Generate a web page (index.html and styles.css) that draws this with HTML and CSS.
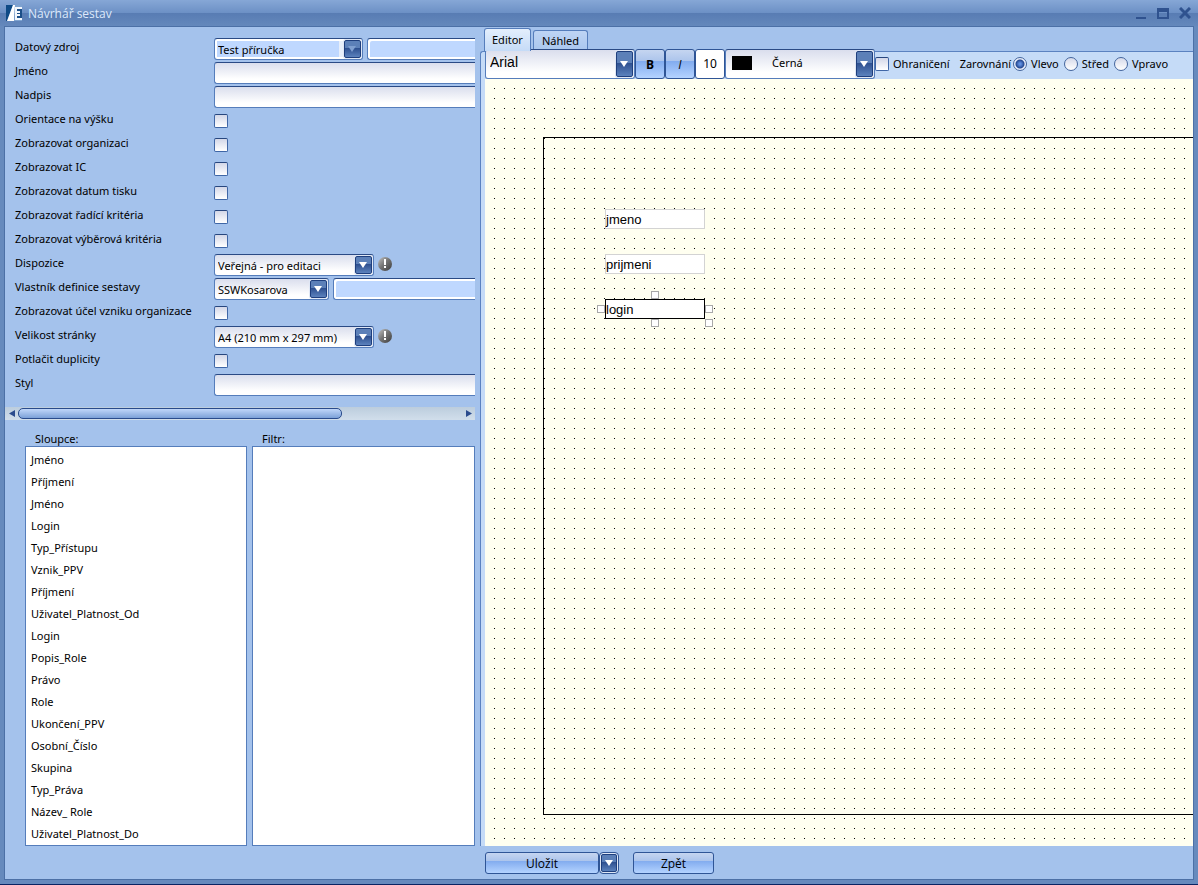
FILE: index.html
```html
<!DOCTYPE html>
<html lang="cs">
<head>
<meta charset="utf-8">
<title>Návrhář sestav</title>
<link rel="stylesheet" href="styles.css">
</head>
<body>
<div class="window">
  <header class="titlebar">
    <svg class="logo" width="16" height="16" viewBox="0 0 16 16" aria-hidden="true">
      <path d="M0 0H7L1 16H0Z" fill="#0e4a86"/>
      <path d="M7 0H9L8 16H1Z" fill="#fff"/>
      <path d="M9 0H16V16H8Z" fill="#7fa3cf"/>
      <path d="M9 2H16V15H9Z" fill="#f4f8fd"/>
      <path d="M11 4H16V6H11ZM14 6H16V11H14ZM11 8H14V9H11ZM11 11H16V13H11Z" fill="#1c4f88"/>
    </svg>
    <h1 class="title">Návrhář sestav</h1>
    <div class="window-buttons">
      <button class="winbtn" type="button" aria-label="Minimalizovat"><svg width="12" height="12" viewBox="0 0 12 12"><path d="M1 11V17H11V19H1Z M1 10H11V12H1Z" fill="#2f528f"/></svg></button>
      <button class="winbtn" type="button" aria-label="Maximalizovat"><svg width="12" height="12" viewBox="0 0 12 12"><path d="M0 1H12V12H0ZM2 5V10H10V5Z" fill="#2f528f" fill-rule="evenodd"/></svg></button>
      <button class="winbtn" type="button" aria-label="Zavřít"><svg width="12" height="12" viewBox="0 0 12 12"><path d="M1 1L11 11M11 1L1 11" stroke="#2f528f" stroke-width="3"/></svg></button>
    </div>
  </header>

  <main class="body">
    <div class="panes">
      <section class="left">
        <form class="form">
          <div class="row"><label for="zdroj">Datový zdroj</label><div class="field"><span class="combo combo-source"><select id="zdroj"><option>Test příručka</option></select></span><input class="text soft" type="text" aria-label="Popis zdroje"></div></div>
          <div class="row"><label for="jmeno">Jméno</label><div class="field"><input class="text" id="jmeno" type="text"></div></div>
          <div class="row"><label for="nadpis">Nadpis</label><div class="field"><input class="text" id="nadpis" type="text"></div></div>
          <div class="row"><label for="vyska">Orientace na výšku</label><div class="field"><input class="check" id="vyska" type="checkbox"></div></div>
          <div class="row"><label for="org">Zobrazovat organizaci</label><div class="field"><input class="check" id="org" type="checkbox"></div></div>
          <div class="row"><label for="ic">Zobrazovat IC</label><div class="field"><input class="check" id="ic" type="checkbox"></div></div>
          <div class="row"><label for="datum">Zobrazovat datum tisku</label><div class="field"><input class="check" id="datum" type="checkbox"></div></div>
          <div class="row"><label for="radici">Zobrazovat řadící kritéria</label><div class="field"><input class="check" id="radici" type="checkbox"></div></div>
          <div class="row"><label for="vyber">Zobrazovat výběrová kritéria</label><div class="field"><input class="check" id="vyber" type="checkbox"></div></div>
          <div class="row"><label for="dispozice">Dispozice</label><div class="field"><span class="combo combo-wide"><select id="dispozice"><option>Veřejná - pro editaci</option></select></span>
            <svg class="info" width="14" height="14" viewBox="0 0 14 14" aria-hidden="true"><defs><linearGradient id="ball" x1="0" y1="0" x2="1" y2="1"><stop offset="0" stop-color="#c4c4c4"/><stop offset=".45" stop-color="#777"/><stop offset="1" stop-color="#3c3c3c"/></linearGradient></defs><circle cx="7" cy="7" r="7" fill="url(#ball)"/><path d="M6 2H8V8H6ZM6 9H8V11H6Z" fill="#fff"/></svg></div></div>
          <div class="row"><label for="vlastnik">Vlastník definice sestavy</label><div class="field"><span class="combo combo-owner"><select id="vlastnik"><option>SSWKosarova</option></select></span><input class="text soft" type="text" aria-label="Popis vlastníka"></div></div>
          <div class="row"><label for="ucel">Zobrazovat účel vzniku organizace</label><div class="field"><input class="check" id="ucel" type="checkbox"></div></div>
          <div class="row"><label for="velikost">Velikost stránky</label><div class="field"><span class="combo combo-wide"><select id="velikost"><option>A4 (210 mm x 297 mm)</option></select></span>
            <svg class="info" width="14" height="14" viewBox="0 0 14 14" aria-hidden="true"><circle cx="7" cy="7" r="7" fill="url(#ball)"/><path d="M6 2H8V8H6ZM6 9H8V11H6Z" fill="#fff"/></svg></div></div>
          <div class="row"><label for="duplicity">Potlačit duplicity</label><div class="field"><input class="check" id="duplicity" type="checkbox"></div></div>
          <div class="row"><label for="styl">Styl</label><div class="field"><input class="text" id="styl" type="text"></div></div>
        </form>
        <div class="scrollbar">
          <svg width="13" height="13" viewBox="0 0 13 13" aria-hidden="true"><path d="M10 3V10L4 6.500Z" fill="#2a4b8d"/></svg>
          <div class="track"><div class="thumb"></div></div>
          <svg width="13" height="13" viewBox="0 0 13 13" aria-hidden="true"><path d="M4 3V10L10 6.500Z" fill="#2a4b8d"/></svg>
        </div>
        <div class="lists">
          <div class="listcol">
            <h2 class="listname">Sloupce:</h2>
            <ul class="list">
              <li>Jméno</li><li>Příjmení</li><li>Jméno</li><li>Login</li><li>Typ_Přístupu</li><li>Vznik_PPV</li><li>Příjmení</li><li>Uživatel_Platnost_Od</li><li>Login</li><li>Popis_Role</li><li>Právo</li><li>Role</li><li>Ukončení_PPV</li><li>Osobní_Číslo</li><li>Skupina</li><li>Typ_Práva</li><li>Název_ Role</li><li>Uživatel_Platnost_Do</li>
            </ul>
          </div>
          <div class="listcol">
            <h2 class="listname">Filtr:</h2>
            <ul class="list"></ul>
          </div>
        </div>
      </section>

      <section class="right">
        <div class="tabs" role="tablist">
          <button class="tab active" type="button" role="tab" aria-selected="true">Editor</button>
          <button class="tab" type="button" role="tab" aria-selected="false">Náhled</button>
        </div>
        <div class="editor">
          <div class="toolbar">
            <span class="combo tall font-combo"><select aria-label="Písmo"><option>Arial</option></select></span>
            <button class="btn tool bold" type="button">B</button>
            <button class="btn tool italic" type="button">I</button>
            <input class="size" type="text" value="10" aria-label="Velikost písma">
            <span class="combo tall color-combo"><span class="swatch"></span><select aria-label="Barva"><option>Černá</option></select></span>
            <label class="option border-option"><input class="check" type="checkbox">Ohraničení</label>
            <span class="align-name">Zarovnání</span>
            <label class="option"><input class="radio" type="radio" name="align" checked>Vlevo</label>
            <label class="option"><input class="radio" type="radio" name="align">Střed</label>
            <label class="option"><input class="radio" type="radio" name="align">Vpravo</label>
          </div>
          <div class="canvas">
            <div class="sheet">
              <div class="item item-jmeno">jmeno</div>
              <div class="item item-prijmeni">prijmeni</div>
              <div class="item item-login">login<i class="grip top"></i><i class="grip left-mid"></i><i class="grip right-mid"></i><i class="grip bottom"></i><i class="grip corner"></i></div>
            </div>
          </div>
        </div>
      </section>
    </div>
    <footer class="footer">
      <div class="split"><button class="btn save" type="button">Uložit</button><button class="drop" type="button" aria-label="Další možnosti"></button></div>
      <button class="btn back" type="button">Zpět</button>
    </footer>
  </main>
</div>
</body>
</html>
```
FILE: styles.css
```css
*, *::before, *::after { box-sizing: border-box; }

body {
  margin: 0;
  font: 11px/16px "Noto Sans", "Open Sans", sans-serif;
  color: #000;
}

button, input, select { font: inherit; color: inherit; margin: 0; }
h1, h2, ul { margin: 0; padding: 0; font: inherit; list-style: none; }

.window {
  display: flex;
  flex-direction: column;
  height: 100vh;
  padding: 0 4px 4px;
  background: #668abd;
  border-bottom: 1px solid #0a2463;
}

/* Title bar */
.titlebar {
  display: flex;
  align-items: center;
  flex: none;
  height: 26px;
  margin: 0 -4px;
  padding: 0 7px 0 6px;
  gap: 6px;
  background: linear-gradient(#86a7d6 0, #6c90c5 13px, #587cb3 13px, #6488bc 100%);
}
.title { flex: 1; padding-top: 1px; color: #dde9fb; font: 12px/18px "Open Sans", "Noto Sans", sans-serif; }
.window-buttons { display: flex; gap: 10px; }
.winbtn { display: block; width: 12px; height: 12px; padding: 0; border: 0; background: none; }
.winbtn svg { display: block; }

.body {
  flex: 1;
  min-height: 0;
  display: flex;
  flex-direction: column;
  border: 1px solid #4c70a6;
  background: #a4c2ec;
}
.panes { flex: 1; min-height: 0; display: grid; grid-template-columns: 475px minmax(0, 1fr); }

/* Properties */
.left { display: flex; flex-direction: column; min-height: 0; padding-right: 5px; }
.form { display: grid; gap: 2px; padding: 11px 0 11px 10px; }
.row { display: grid; grid-template-columns: 199px minmax(0, 1fr); height: 22px; }
.row > label { padding-top: 1px; white-space: nowrap; }
.field { display: flex; align-items: center; gap: 4px; overflow: hidden; }

.text {
  flex: 1;
  min-width: 0;
  height: 22px;
  border: 1px solid #557dbb;
  border-top-color: #2a4a85;
  border-right: 0;
  border-radius: 3px 0 0 3px;
  background: linear-gradient(#dadeed, #fff 80%);
}
.text.soft { background: #bfd8ff; box-shadow: inset 2px 2px #fff, inset 0 -2px #fff; }

.check {
  appearance: none;
  flex: none;
  width: 14px;
  height: 14px;
  border: 1px solid #3f66a6;
  border-top-color: #27467e;
  border-radius: 2px;
  background: linear-gradient(#d3d7e8, #fff);
}

.combo { position: relative; flex: none; height: 22px; }
.combo select {
  appearance: none;
  display: block;
  width: 100%;
  height: 100%;
  padding: 1px 22px 0 3px;
  border: 1px solid #557dbb;
  border-top-color: #2a4a85;
  border-radius: 3px;
  background: linear-gradient(#dadeed, #fff 80%);
}
.combo::before, .drop {
  border: 1px solid #1f3f7d;
  border-radius: 2px;
  background: linear-gradient(#5c80b8 0 45%, #2d4f8f 45%, #5c82bd);
  box-shadow: 0 0 0 1px #dfe7f5;
}
.combo::before {
  content: "";
  position: absolute;
  top: 2px;
  right: 2px;
  bottom: 2px;
  width: 17px;
  pointer-events: none;
}
.combo::after, .drop::after {
  content: "";
  position: absolute;
  top: 50%;
  right: 7px;
  margin-top: -3px;
  border: solid transparent;
  border-width: 6px 4px 0;
  border-top-color: #fff;
  pointer-events: none;
}
.combo-source { width: 149px; }
.combo-source select { background: linear-gradient(90deg, #bfd8ff calc(100% - 23px), #e8effa 0); box-shadow: inset 0 0 0 2px #fff; }
.combo-source::after { border-top-color: #7f9fd0; }
.combo-wide { width: 160px; }
.combo-owner { width: 115px; }
.info { flex: none; margin-bottom: 2px; }

/* Horizontal scrollbar */
.scrollbar { display: flex; flex: none; height: 13px; background: linear-gradient(#bccddd, #d1deeb); }
.track { flex: 1; padding: 1px 0; }
.thumb {
  width: 73%;
  height: 11px;
  border: 1px solid #294b8c;
  border-radius: 5px;
  background: linear-gradient(#c0d7fa, #7ca1d8);
}

.lists { flex: 1; min-height: 0; display: grid; grid-template-columns: 222px minmax(0, 1fr); gap: 5px; padding: 11px 0 0 20px; }
.listcol { display: flex; flex-direction: column; min-height: 0; }
.listname { height: 15px; padding-left: 10px; }
.list { flex: 1; min-height: 0; overflow: hidden; padding: 2px 5px 0; border: 1px solid #557dbb; background: #fff; }
.list li { height: 22px; line-height: 22px; white-space: nowrap; }

/* Editor */
.right { display: flex; flex-direction: column; min-height: 0; }
.tabs { display: flex; align-items: flex-end; gap: 2px; flex: none; height: 24px; padding-left: 4px; }
.tab {
  position: relative;
  height: 21px;
  padding: 0 8px;
  border: 1px solid #557dbb;
  border-bottom: 0;
  border-radius: 3px 3px 0 0;
  background: linear-gradient(#bed4f4, #a9c6ee);
}
.tab.active { z-index: 2; height: 23px; padding: 0 7px; background: linear-gradient(#e3eefc, #c5dbf7); }
.editor {
  flex: 1;
  min-height: 0;
  display: flex;
  flex-direction: column;
  padding-left: 4px;
  border: solid #5b82c0;
  border-width: 1px 0 0 1px;
  border-radius: 3px 0 0;
  background: #c5dbf7;
}
.toolbar { display: flex; align-items: center; flex: none; height: 27px; white-space: nowrap; }
.combo.tall { align-self: flex-end; height: 30px; }
.font-combo { width: 150px; }
.font-combo select { padding: 0 22px 4px 4px; font: 14px "Liberation Sans", Arial, sans-serif; }
.color-combo { width: 150px; }
.color-combo select { padding: 0 22px 3px 46px; }
.swatch { position: absolute; top: 7px; left: 7px; width: 20px; height: 14px; background: #000; }

.btn {
  border: 1px solid #2f5596;
  border-radius: 3px;
  background: linear-gradient(#c5d5f0 0, #adc5ec 38%, #80aaee 38%, #b4d3ff);
  padding: 0;
  text-align: center;
}
.tool { align-self: flex-end; flex: none; width: 30px; height: 30px; padding-top: 1px; font: 12px/16px "Open Sans", "Noto Sans", sans-serif; }
.tool.bold { font-weight: bold; }
.tool.italic { font-style: italic; }
.size { align-self: flex-end; flex: none; width: 30px; height: 30px; padding: 0 0 2px; border: 1px solid #2f5596; border-radius: 3px; background: #fff; text-align: center; font-size: 12px; }

.option { display: flex; align-items: center; gap: 4px; margin: 0 5px 3px 0; }
.border-option { margin-right: 10px; }
.align-name { margin: 0 2px 3px 0; }
.radio {
  appearance: none;
  flex: none;
  width: 14px;
  height: 14px;
  border: 1px solid #44659d;
  border-radius: 50%;
  background: linear-gradient(#d6daea, #fff);
}
.radio:checked { background: radial-gradient(circle at 50% 50%, #5f8ee0 0 1px, #24478f 4px, #e9eefa 5px); }

.canvas {
  flex: 1;
  min-height: 0;
  overflow: hidden;
  padding: 58px 0 31px 58px;
  background-image: linear-gradient(90deg, #fffff0 9px, transparent 9px), linear-gradient(#fffff0 9px, #000 9px);
  background-size: 10px 10px;
}
.sheet { position: relative; height: 100%; border: 1px solid #000; border-right: 0; }
.item {
  position: absolute;
  left: 61px;
  width: 100px;
  height: 20px;
  border: 1px solid #d3d3d3;
  background: #fff;
  font: 13px/20px "Liberation Sans", Arial, sans-serif;
}
.item-jmeno { top: 71px; }
.item-prijmeni { top: 116px; }
.item-login { top: 161px; border-color: #000; }
.grip { position: absolute; width: 8px; height: 8px; border: 1px solid #a9a9a9; background: #fff; }
.top { top: -9px; left: 45px; }
.left-mid { top: 5px; left: -9px; }
.right-mid { top: 5px; right: -9px; }
.bottom { bottom: -9px; left: 45px; }
.corner { right: -9px; bottom: -9px; }

/* Footer */
.footer { display: flex; align-items: center; gap: 14px; flex: none; height: 33px; padding-left: 480px; }
.split { display: flex; }
.save { width: 114px; height: 22px; }
.back { width: 81px; height: 22px; }
.save, .back { padding-top: 2px; font: 12px/16px "Open Sans", "Noto Sans", sans-serif; }
.drop { position: relative; width: 16px; height: 18px; margin: 2px; padding: 0; outline: 1px solid #2f5596; outline-offset: 1px; }
.drop::after { right: 3px; }
```
